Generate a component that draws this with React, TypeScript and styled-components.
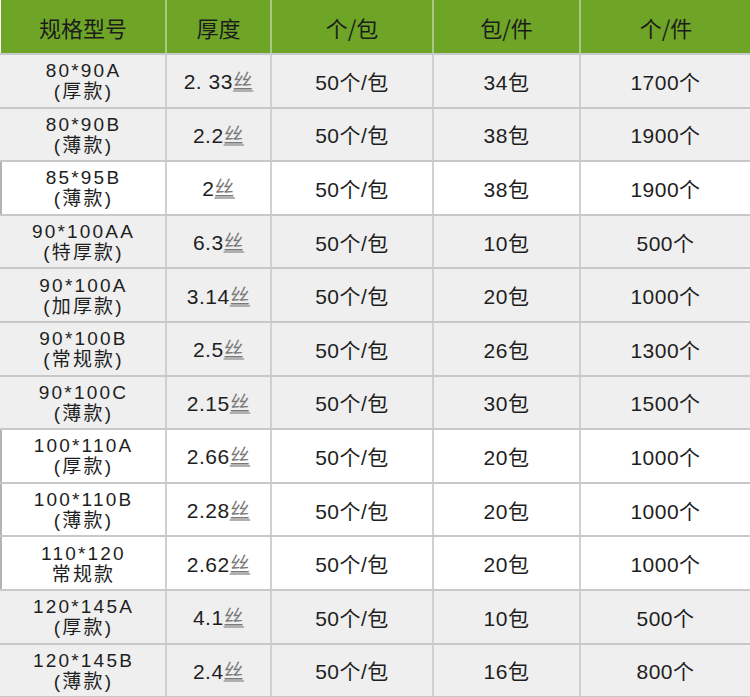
import React from 'react';
import styled, { createGlobalStyle } from 'styled-components';

const GlobalStyle = createGlobalStyle`
  html, body {
    margin: 0;
    padding: 0;
    background: #ffffff;
  }
  body {
    font-family: 'Liberation Sans', 'Noto Sans CJK SC', sans-serif;
  }
`;

interface SpecRow {
  model: string;
  kind: string;
  thickness: string;
  perPack: string;
  packs: string;
  pieces: string;
  white?: boolean;
}

const rows: SpecRow[] = [
  { model: '80*90A', kind: '(厚款)', thickness: '2. 33', perPack: '50个/包', packs: '34包', pieces: '1700个' },
  { model: '80*90B', kind: '(薄款)', thickness: '2.2', perPack: '50个/包', packs: '38包', pieces: '1900个' },
  { model: '85*95B', kind: '(薄款)', thickness: '2', perPack: '50个/包', packs: '38包', pieces: '1900个', white: true },
  { model: '90*100AA', kind: '(特厚款)', thickness: '6.3', perPack: '50个/包', packs: '10包', pieces: '500个' },
  { model: '90*100A', kind: '(加厚款)', thickness: '3.14', perPack: '50个/包', packs: '20包', pieces: '1000个' },
  { model: '90*100B', kind: '(常规款)', thickness: '2.5', perPack: '50个/包', packs: '26包', pieces: '1300个' },
  { model: '90*100C', kind: '(薄款)', thickness: '2.15', perPack: '50个/包', packs: '30包', pieces: '1500个' },
  { model: '100*110A', kind: '(厚款)', thickness: '2.66', perPack: '50个/包', packs: '20包', pieces: '1000个', white: true },
  { model: '100*110B', kind: '(薄款)', thickness: '2.28', perPack: '50个/包', packs: '20包', pieces: '1000个', white: true },
  { model: '110*120', kind: '常规款', thickness: '2.62', perPack: '50个/包', packs: '20包', pieces: '1000个', white: true },
  { model: '120*145A', kind: '(厚款)', thickness: '4.1', perPack: '50个/包', packs: '10包', pieces: '500个' },
  { model: '120*145B', kind: '(薄款)', thickness: '2.4', perPack: '50个/包', packs: '16包', pieces: '800个' },
];

const headers = ['规格型号', '厚度', '个/包', '包/件', '个/件'];
const widths = [165, 105, 162, 147, 171];

const App = () => {
  return (
    <>
      <GlobalStyle />
      <Table>
        <colgroup>
          {widths.map((w, i) => (
            <col key={i} style={{ width: w }} />
          ))}
        </colgroup>
        <thead>
          <tr>
            {headers.map((h) => (
              <HeadCell key={h}>{h}</HeadCell>
            ))}
          </tr>
        </thead>
        <tbody>
          {rows.map((r) => (
            <Row key={r.model} $white={r.white}>
              <ModelCell>
                <div>{r.model}</div>
                <div>{r.kind}</div>
              </ModelCell>
              <Cell>
                {r.thickness}
                <Unit>丝</Unit>
              </Cell>
              <Cell>{r.perPack}</Cell>
              <Cell>{r.packs}</Cell>
              <Cell>{r.pieces}</Cell>
            </Row>
          ))}
        </tbody>
      </Table>
    </>
  );
};
export default App;

const Table = styled.table`
  width: 750px;
  height: 697px;
  border-collapse: collapse;
  table-layout: fixed;
  color: #1e1e1e;
`;

const HeadCell = styled.th`
  height: 53px;
  padding: 0;
  background: #6fa527;
  color: #1c1c1c;
  font-family: 'Noto Sans CJK SC', sans-serif;
  font-size: 22px;
  font-weight: 400;
  text-align: center;
  border-left: 2px solid #a9c983;
  border-bottom: 2px solid #c8c8c8;
  &:first-child {
    border-left: none;
  }
`;

const Row = styled.tr<{ $white?: boolean }>`
  height: 53.6px;
  background: ${({ $white }) => ($white ? '#ffffff' : '#efefef')};
  & > td:first-child {
    border-left: 2px solid ${({ $white }) => ($white ? '#b4b4b4' : '#efefef')};
  }
  & > td:last-child {
    border-right: 2px solid ${({ $white }) => ($white ? '#b4b4b4' : '#efefef')};
  }
`;

const Cell = styled.td`
  padding: 0;
  text-align: center;
  vertical-align: middle;
  font-size: 21px;
  letter-spacing: 0.5px;
  border-left: 2px solid #d0d0d0;
  border-bottom: 2px solid #c8c8c8;
`;

const ModelCell = styled(Cell)`
  font-size: 19px;
  line-height: 21px;
  letter-spacing: 2.2px;
  padding-top: 1px;
`;

const Unit = styled.span`
  color: #7a7a7a;
  font-size: 20px;
  text-decoration: underline;
  text-decoration-color: #b0b0b0;
  text-underline-offset: 1px;
`;
